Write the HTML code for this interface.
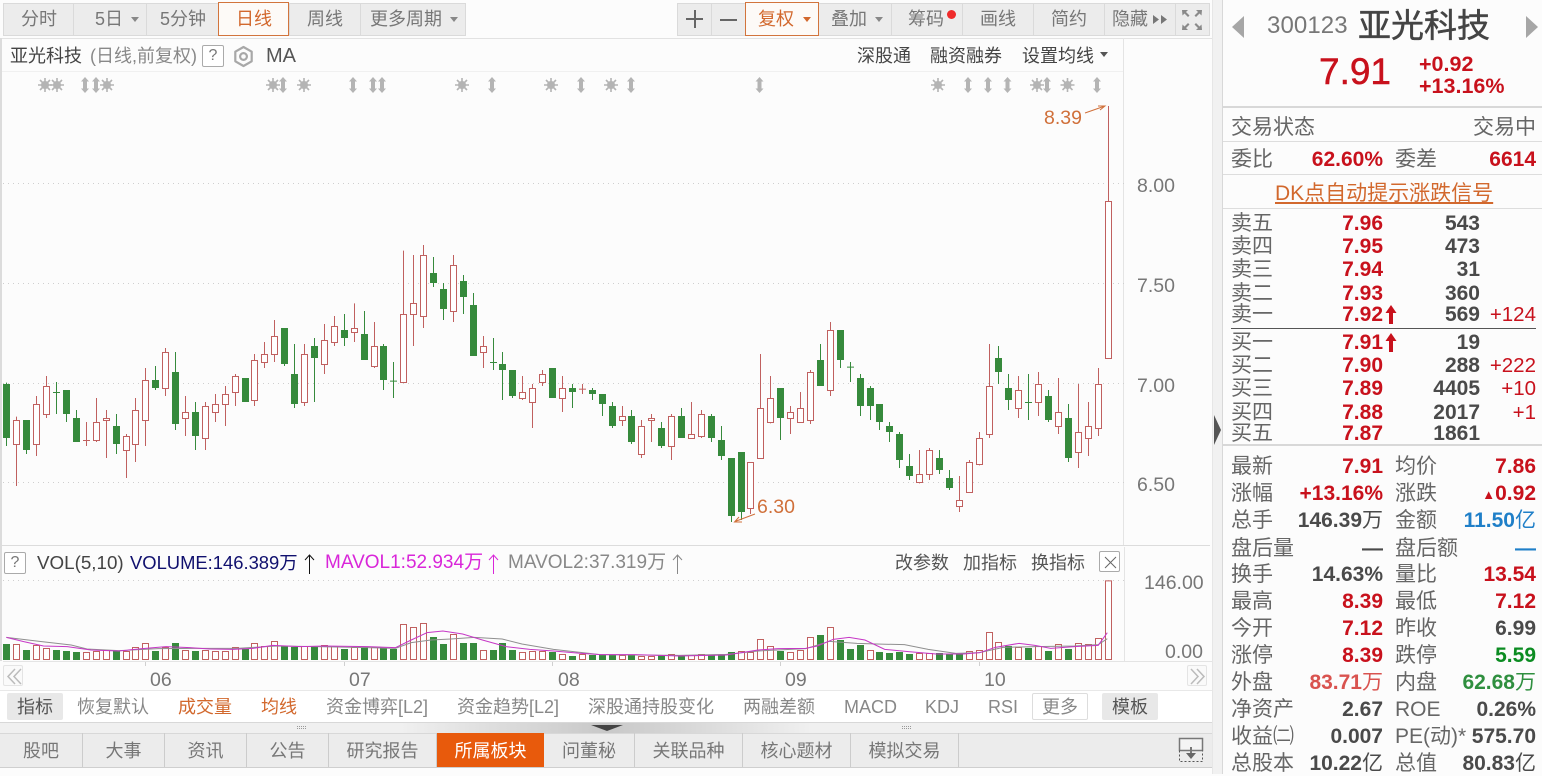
<!DOCTYPE html>
<html><head><meta charset="utf-8"><style>
html,body{margin:0;padding:0;width:1542px;height:774px;overflow:hidden;background:#fcfcfc;font-family:"Liberation Sans","Noto Sans CJK SC",sans-serif;color:#666}
.t{position:absolute;white-space:nowrap;line-height:24px;height:24px;font-size:18px}
.ax{font-size:19.5px;color:#777}
.b{position:absolute;box-sizing:border-box}
.tb{position:absolute;top:3px;height:33px;background:#ececec;border:1px solid #dadada;box-sizing:border-box;color:#777;font-size:18px;line-height:31px;white-space:nowrap}
.tb span{position:absolute;top:0}
.car{position:absolute;width:0;height:0;border-left:4px solid transparent;border-right:4px solid transparent;border-top:5px solid #888;top:17px}
.tab{position:absolute;top:733px;height:34px;line-height:37px;text-align:center;font-size:18px;color:#777;border-right:1px solid #ccc;box-sizing:border-box}
.r{position:absolute;left:1231px;width:305px;height:24px;line-height:24px;font-size:21px;color:#666;white-space:nowrap}
.r span{position:absolute;top:0}
.l2{left:164px}
.v1{right:153px;font-weight:700;font-size:21px;color:#c8111c}
.v2{right:0;font-weight:700;font-size:21px;color:#c8111c}
.dk{color:#4a4a4a!important}
.n{font-weight:400;font-size:21px}
.p{left:111px;width:41px;text-align:right;font-weight:700;font-size:21px;color:#c8111c}
.q{right:56px;font-weight:700;font-size:21px;color:#4a4a4a}
.d{right:0;font-size:20.5px;color:#c8111c}
.hr{position:absolute;left:1223px;width:319px;height:1px;background:#ddd}
.tl{position:absolute;top:690px;height:32px;line-height:35px;font-size:18px;color:#888;white-space:nowrap}
.or{color:#d2682d}
</style></head><body>

<!-- left edge -->
<div class="b" style="left:0;top:38px;width:2px;height:623px;background:#dcdcdc"></div>

<!-- toolbar left -->
<div class="tb" style="left:3px;width:71px"><span style="left:17px">分时</span></div>
<div class="tb" style="left:73px;width:74px"><span style="left:21px">5日</span><i class="car" style="left:57px;top:13px"></i></div>
<div class="tb" style="left:146px;width:73px"><span style="left:13px">5分钟</span></div>
<div class="tb" style="left:289px;width:72px"><span style="left:17px">周线</span></div>
<div class="tb" style="left:360px;width:106px"><span style="left:9px">更多周期</span><i class="car" style="left:89px;top:13px"></i></div>
<div class="tb" style="left:218px;width:71px;background:#fdfaf7;border-color:#d2743c;color:#d2682d;top:2px;height:34px;line-height:33px"><span style="left:17px">日线</span></div>

<!-- toolbar right -->
<div class="tb" style="left:677px;width:35px"></div>
<div class="tb" style="left:711px;width:35px"></div>
<div class="b" style="left:686px;top:18px;width:17px;height:2px;background:#666"></div>
<div class="b" style="left:694px;top:10px;width:2px;height:18px;background:#666"></div>
<div class="b" style="left:720px;top:19px;width:17px;height:2px;background:#666"></div>
<div class="tb" style="left:818px;width:74px"><span style="left:12px">叠加</span><i class="car" style="left:56px;top:13px"></i></div>
<div class="tb" style="left:891px;width:72px"><span style="left:16px">筹码</span></div>
<div class="b" style="left:947px;top:10px;width:9px;height:9px;border-radius:50%;background:#ef2b2b"></div>
<div class="tb" style="left:962px;width:72px"><span style="left:17px">画线</span></div>
<div class="tb" style="left:1033px;width:72px"><span style="left:17px">简约</span></div>
<div class="tb" style="left:1104px;width:72px"><span style="left:7px">隐藏</span></div>
<svg class="b" style="left:1153px;top:14px" width="15" height="11" fill="#777"><path d="M0 1L6 5.500 0 10ZM8 1L14 5.500 8 10Z"/></svg>
<div class="tb" style="left:1175px;width:35px"></div>
<div class="tb" style="left:745px;width:74px;background:#fdfaf7;border-color:#d2743c;color:#d2682d;top:2px;height:34px;line-height:33px"><span style="left:12px">复权</span><i class="car" style="left:57px;top:14px;border-top-color:#d2682d"></i></div>
<svg class="b" style="left:1180px;top:8px" width="24" height="24" viewBox="0 0 24 24" fill="#8a8a8a"><path d="M2 2h6l-2 2 3.500 3.500-1.500 1.500-3.500-3.500-2 2zM22 2h-6l2 2-3.500 3.500 1.500 1.500 3.500-3.500 2 2zM2 22h6l-2-2 3.500-3.500-1.500-1.500-3.500 3.500-2-2zM22 22h-6l2-2-3.500-3.500 1.500-1.500 3.500 3.500 2-2z"/></svg>

<div class="b" style="left:2px;top:38px;width:1210px;height:1px;background:#e2e2e2"></div>

<!-- title row -->
<div class="t" style="left:10px;top:44px;color:#444">亚光科技</div>
<div class="t" style="left:90px;top:44px;color:#888">(日线,前复权)</div>
<div class="b" style="left:202px;top:45px;width:22px;height:22px;border:1px solid #aaa;border-radius:2px;font-size:16px;line-height:20px;text-align:center;color:#777;background:#fff">?</div>
<svg class="b" style="left:232px;top:45px" width="23" height="23" viewBox="0 0 23 23" fill="none" stroke="#a8a8a8" stroke-width="2.200" stroke-linejoin="round"><path d="M11.500 2l8.200 4.700v9.600l-8.200 4.700-8.200-4.700V6.700z"/><circle cx="11.500" cy="11.500" r="3.400"/></svg>
<div class="t" style="left:266px;top:44px;color:#555;font-size:20px">MA</div>
<div class="t" style="left:857px;top:44px;color:#444">深股通</div>
<div class="t" style="left:930px;top:44px;color:#444">融资融券</div>
<div class="t" style="left:1022px;top:44px;color:#444">设置均线</div>
<i class="car" style="left:1100px;top:52px;border-top-color:#555"></i>
<div class="b" style="left:2px;top:71px;width:1121px;height:1px;background:#f0f0f0"></div>
<div class="b" style="left:1123px;top:38px;width:1px;height:507px;background:#e4e4e4"></div>

<!-- main chart -->
<svg class="b" style="left:0;top:0" width="1212" height="690" viewBox="0 0 1212 690">
<defs>
<g id="s" fill="#b4b4b4"><circle r="4"/><path d="M-7 0H7M0-7V7M-5-5L5 5M-5 5L5-5" stroke="#b4b4b4" stroke-width="1.600"/></g>
<path id="a" fill="#b4b4b4" d="M0-8L4-3.500H2V3.500H4L0 8-4 3.500H-2V-3.500H-4z"/>
</defs>
<g stroke="#cfcfcf" stroke-width="1" stroke-dasharray="1 4">
<path d="M3 183.500H1128M3 283.500H1128M3 383.500H1128M3 482.500H1128M3 580.500H1124"/>
</g>
<use href="#s" x="45" y="85"/><use href="#s" x="57" y="85"/><use href="#a" x="85" y="85"/><use href="#a" x="96" y="85"/><use href="#s" x="107" y="85"/>
<use href="#s" x="273" y="85"/><use href="#a" x="283" y="85"/><use href="#s" x="304" y="85"/><use href="#a" x="353" y="85"/><use href="#a" x="373" y="85"/><use href="#a" x="382" y="85"/>
<use href="#s" x="462" y="85"/><use href="#a" x="492" y="85"/><use href="#s" x="551" y="85"/><use href="#a" x="581" y="85"/><use href="#s" x="611" y="85"/><use href="#a" x="631" y="85"/><use href="#a" x="759.500" y="85"/>
<use href="#s" x="938" y="85"/><use href="#a" x="968" y="85"/><use href="#a" x="988" y="85"/><use href="#a" x="1007.500" y="85"/><use href="#s" x="1037" y="85"/><use href="#a" x="1047" y="85"/><use href="#s" x="1067.500" y="85"/><use href="#a" x="1097" y="85"/>

<!-- group 1 -->
<g transform="translate(0,230) scale(.333333) translate(.5,0)" fill="none">
<path stroke="#c0605f" stroke-width="3" d="M49 560V768M109 498V678M139 438V564M259 576V648M289 504V636M319 540V684M379 612V744M406 504V696M436 414V648M496 354V498M556 498V618M616 516V660M646 492V576M676 468V588M706 432V528M763 372V528M793 336V414M823 270V396M913 342V528M973 282V432M1003 258V348M1063 220V336M1123 276V414"/>
<path stroke="#368a3c" stroke-width="3" d="M19 458V648M79 571V672M169 456V552M199 480V576M229 540V636M349 552V672M466 408V480M526 366V600M586 516V660M853 294V408M883 342V534M943 324V516M1033 252V348M1093 243V390M1150 342V480M1180 396V504"/>
<path stroke="#368a3c" stroke-width="21" d="M19 462V624M79 570V660M169 486V489M199 480V552M229 564V636M349 588V642M466 450V474M526 426V582M586 546V618M736 444V516M853 294V402M883 432V522M943 348V384M1033 300V324M1093 312V390M1150 348V450M1180 452V455"/>
<path stroke="#c0605f" stroke-width="21" d="M259 630V633"/>
<path transform="translate(0,.5)" stroke="#c0605f" stroke-width="3" fill="#fff" d="M49 571m-9 0h18V643h-18zM109 523m-9 0h18V643h-18zM139 469m-9 0h18V553h-18zM289 577m-9 0h18V631h-18zM319 565m-9 0h18V571h-18zM379 619m-9 0h18V661h-18zM406 541m-9 0h18V643h-18zM436 451m-9 0h18V571h-18zM496 367m-9 0h18V475h-18zM556 547m-9 0h18V565h-18zM616 529m-9 0h18V625h-18zM646 523m-9 0h18V547h-18zM676 493m-9 0h18V523h-18zM706 439m-9 0h18V487h-18zM763 391m-9 0h18V511h-18zM793 373m-9 0h18V397h-18zM823 319m-9 0h18V373h-18zM913 373m-9 0h18V517h-18zM973 331m-9 0h18V403h-18zM1003 289m-9 0h18V337h-18zM1063 295m-9 0h18V307h-18zM1123 349m-9 0h18V409h-18z"/>
</g>

<!-- group 2 -->
<g transform="translate(400,230) scale(.333333) translate(.5,0)" fill="none">
<path stroke="#c0605f" stroke-width="3" d="M10 62V458M40 75V348M70 45V294M160 75V276M250 318V414M367 438V510M397 462V594M427 420V468M487 438V546M547 462V492M667 528V588M724 570V684M754 552V636M814 552V690M874 516V624M904 540V624M1051 697V852M1081 372V686M1111 438V580M1171 528V612"/>
<path stroke="#368a3c" stroke-width="3" d="M100 81V171M130 159V270M190 135V252M220 189V378M280 324V420M307 366V510M337 420V504M517 462V534M577 474V510M607 492V558M637 516V594M694 540V642M784 576V654M844 534V624M934 552V636M964 588V690M994 684V876M1024 666V870M1141 474V630"/>
<path stroke="#368a3c" stroke-width="21" d="M100 129V159M130 177V237M190 153V201M220 225V378M280 396V399M307 402V420M337 420V498M457 414V504M517 474V486M577 480V492M607 492V522M637 528V588M694 558V636M784 594V648M844 558V624M934 558V624M964 630V678M994 684V858M1024 666V846M1141 474V564"/>
<path stroke="#c0605f" stroke-width="21" d="M547 476V479"/>
<path transform="translate(0,.5)" stroke="#c0605f" stroke-width="3" fill="#fff" d="M10 253m-9 0h18V457h-18zM40 220m-9 0h18V253h-18zM70 76m-9 0h18V259h-18zM160 106m-9 0h18V244h-18zM250 349m-9 0h18V367h-18zM367 487m-9 0h18V505h-18zM397 475m-9 0h18V517h-18zM427 433m-9 0h18V457h-18zM487 475m-9 0h18V505h-18zM667 559m-9 0h18V571h-18zM724 589m-9 0h18V673h-18zM754 565m-9 0h18V571h-18zM814 559m-9 0h18V649h-18zM874 613m-9 0h18V625h-18zM904 553m-9 0h18V619h-18zM1051 697m-9 0h18V835h-18zM1081 535m-9 0h18V685h-18zM1111 505m-9 0h18V577h-18zM1171 547m-9 0h18V565h-18z"/>
</g>

<!-- group 3 -->
<g transform="translate(780,90) scale(.333333) translate(.5,0)" fill="none">
<path stroke="#c0605f" stroke-width="3" d="M61 906V998M91 840V1002M151 696V918M418 1080V1180M448 1074V1170M538 1158V1266M568 1110V1208M598 1026V1126M628 762V1044M715 858V984M775 846V978M835 864V1032M895 882V1134M925 936V1098M955 834V1038M985 48V806"/>
<path stroke="#368a3c" stroke-width="3" d="M121 762V888M181 720V834M211 816V876M241 852V978M271 888V990M298 942V1020M328 996V1056M358 1026V1134M388 1092V1170M478 1080V1152M508 1140V1200M655 768V882M685 852V960M745 852V990M805 900V996M865 942V1116"/>
<path stroke="#368a3c" stroke-width="21" d="M121 810V888M181 720V810M211 830V833M241 864V948M271 894V948M298 942V996M328 1008V1026M358 1032V1110M388 1128V1158M478 1104V1140M508 1164V1194M655 804V846M685 894V930M745 936V939M805 918V990M865 984V1104"/>
<path transform="translate(0,.5)" stroke="#c0605f" stroke-width="3" fill="#fff" d="M61 955m-9 0h18V997h-18zM91 847m-9 0h18V991h-18zM151 721m-9 0h18V901h-18zM418 1153m-9 0h18V1177h-18zM448 1081m-9 0h18V1153h-18zM538 1231m-9 0h18V1249h-18zM568 1117m-9 0h18V1207h-18zM598 1045m-9 0h18V1123h-18zM628 889m-9 0h18V1033h-18zM715 901m-9 0h18V955h-18zM775 883m-9 0h18V937h-18zM835 967m-9 0h18V1009h-18zM895 1027m-9 0h18V1087h-18zM925 1009m-9 0h18V1045h-18zM955 883m-9 0h18V1015h-18zM985 334m-9 0h18V805h-18z"/>
</g>

<!-- arrows at high/low -->
<path d="M1085 113L1105 106M1098 106L1105 106L1100 110" fill="none" stroke="#d0703a" stroke-width="1"/>
<path d="M755 514L735 521.500M742 522L734.500 522L739 517" fill="none" stroke="#d0703a" stroke-width="1"/>

<!-- volume bars -->
<g transform="translate(0,540) scale(.333333) translate(.5,0)" fill="none">
<path stroke="#368a3c" stroke-width="21" d="M19 312V360M79 330V360M169 330V360M199 333V360M229 336V360M349 333V360M466 333V360M526 309V360M586 333V360M736 327V360M853 318V360M883 321V360M943 318V360M1033 327V360M1093 321V360M1150 324V360M1180 327V360"/>
<path transform="translate(0,.5)" stroke="#c0605f" stroke-width="3" fill="#fff" d="M49 313m-9 0h18V358h-18zM109 316m-9 0h18V358h-18zM139 325m-9 0h18V358h-18zM259 337m-9 0h18V358h-18zM289 334m-9 0h18V358h-18zM319 331m-9 0h18V358h-18zM379 334m-9 0h18V358h-18zM406 322m-9 0h18V358h-18zM436 310m-9 0h18V358h-18zM496 322m-9 0h18V358h-18zM556 331m-9 0h18V358h-18zM616 331m-9 0h18V358h-18zM646 334m-9 0h18V358h-18zM676 334m-9 0h18V358h-18zM706 322m-9 0h18V358h-18zM763 310m-9 0h18V358h-18zM793 319m-9 0h18V358h-18zM823 304m-9 0h18V358h-18zM913 319m-9 0h18V358h-18zM973 316m-9 0h18V358h-18zM1003 319m-9 0h18V358h-18zM1063 322m-9 0h18V358h-18zM1123 322m-9 0h18V358h-18z"/>
</g>
<g transform="translate(400,540) scale(.333333) translate(.5,0)" fill="none">
<path stroke="#368a3c" stroke-width="21" d="M100 291V360M130 312V360M190 309V360M220 309V360M280 330V360M307 309V360M337 330V360M457 336V360M517 348V360M577 345V360M607 345V360M637 345V360M694 345V360M784 345V360M844 345V360M934 345V360M964 345V360M994 336V360M1141 333V360"/>
<path transform="translate(0,.5)" stroke="#c0605f" stroke-width="3" fill="#fff" d="M10 253m-9 0h18V358h-18zM40 262m-9 0h18V358h-18zM70 250m-9 0h18V358h-18zM160 283m-9 0h18V358h-18zM250 331m-9 0h18V358h-18zM367 337m-9 0h18V358h-18zM397 334m-9 0h18V358h-18zM427 334m-9 0h18V358h-18zM487 343m-9 0h18V358h-18zM547 343m-9 0h18V358h-18zM667 346m-9 0h18V358h-18zM724 349m-9 0h18V358h-18zM754 349m-9 0h18V358h-18zM814 343m-9 0h18V358h-18zM874 346m-9 0h18V358h-18zM904 343m-9 0h18V358h-18zM1024 334m-9 0h18V358h-18zM1051 337m-9 0h18V358h-18zM1081 298m-9 0h18V358h-18zM1111 319m-9 0h18V358h-18zM1171 337m-9 0h18V358h-18z"/>
</g>
<g transform="translate(780,540) scale(.333333) translate(.5,0)" fill="none">
<path stroke="#368a3c" stroke-width="21" d="M121 285V360M181 300V360M211 327V360M241 315V360M298 336V360M328 339V360M358 336V360M388 342V360M478 339V360M508 342V360M538 339V360M685 318V360M745 324V360M805 333V360M865 327V360"/>
<path transform="translate(0,.5)" stroke="#c0605f" stroke-width="3" fill="#fff" d="M61 331m-9 0h18V358h-18zM91 292m-9 0h18V358h-18zM151 262m-9 0h18V358h-18zM271 331m-9 0h18V358h-18zM418 340m-9 0h18V358h-18zM448 340m-9 0h18V358h-18zM568 334m-9 0h18V358h-18zM598 331m-9 0h18V358h-18zM628 277m-9 0h18V358h-18zM655 307m-9 0h18V358h-18zM715 322m-9 0h18V358h-18zM775 319m-9 0h18V358h-18zM835 313m-9 0h18V358h-18zM895 310m-9 0h18V358h-18zM925 313m-9 0h18V358h-18zM955 295m-9 0h18V358h-18zM985 122m-9 0h18V358h-18z"/>
</g>

<!-- volume MA lines -->
<g transform="translate(0,540) scale(.3954,.333333)" fill="none">
<path vector-effect="non-scaling-stroke" stroke="#8f8f8f" stroke-width="1" d="M16 292L100 304 180 315 220 327 300 332 400 326 500 325 600 325 700 318 800 320 900 322 1000 325 1040 308 1090 300 1140 297 1200 292 1270 297 1320 312 1400 328 1518 344"/>
<path vector-effect="non-scaling-stroke" stroke="#c637c6" stroke-width="1" d="M16 292L60 305 110 318 170 320 230 330 300 333 360 326 420 320 480 323 530 327 590 328 640 325 690 316 760 320 820 318 930 320 1000 323 1040 300 1080 278 1120 273 1170 282 1220 300 1280 320 1340 328 1400 333 1470 340 1518 344"/>
</g>
<g transform="translate(600,540) scale(.3954,.333333)" fill="none">
<path vector-effect="non-scaling-stroke" stroke="#8f8f8f" stroke-width="1" d="M0 344L200 346 320 343 400 333 520 326 580 304 650 310 700 312 770 314 830 328 900 340 960 338 1020 322 1100 320 1200 318 1260 314 1283 296"/>
<path vector-effect="non-scaling-stroke" stroke="#c637c6" stroke-width="1" d="M0 344L90 344 200 348 320 345 400 330 450 326 520 325 550 318 590 298 630 292 670 300 720 328 780 335 850 342 920 342 960 338 1000 322 1060 310 1100 316 1140 325 1200 320 1260 316 1283 278"/>
</g>
<path d="M3 661.500H1212" stroke="#e4e4e4"/>
<path d="M145.500 662V666M344.500 662V666M552.500 662V666M780.500 662V666M979.500 662V666" stroke="#d0d0d0"/>
</svg>

<div class="t" style="left:1044px;top:106px;color:#d0703a;font-size:19.5px">8.39</div>
<div class="t" style="left:757px;top:495px;color:#d0703a;font-size:19.5px">6.30</div>
<div class="t ax" style="left:1137px;top:174px">8.00</div>
<div class="t ax" style="left:1137px;top:274px">7.50</div>
<div class="t ax" style="left:1137px;top:374px">7.00</div>
<div class="t ax" style="left:1137px;top:473px">6.50</div>

<!-- volume head -->
<div class="b" style="left:2px;top:545px;width:1208px;height:1px;background:#dcdcdc"></div>
<div class="b" style="left:4px;top:552px;width:22px;height:22px;border:1px solid #aaa;border-radius:2px;font-size:16px;line-height:20px;text-align:center;color:#777;background:#fff">?</div>
<div class="t" style="left:37px;top:551px;color:#444;font-size:18.800px">VOL(5,10)</div>
<div class="t" style="left:130px;top:551px;color:#10106e;font-size:18.400px">VOLUME:146.389万</div>
<div class="t" style="left:325px;top:551px;color:#d926d9;font-size:19px">MAVOL1:52.934万</div>
<div class="t" style="left:508px;top:551px;color:#888;font-size:19px">MAVOL2:37.319万</div>
<svg class="b" style="left:300px;top:552px" width="390" height="24" fill="none" stroke-width="1"><path stroke="#111" d="M9.500 22V3M5 8L9.500 3 14 8"/><path stroke="#d926d9" d="M193.500 22V3M189 8L193.500 3 198 8"/><path stroke="#888" d="M377.500 22V3M373 8L377.500 3 382 8"/></svg>
<div class="t" style="left:895px;top:551px;color:#555">改参数</div>
<div class="t" style="left:963px;top:551px;color:#555">加指标</div>
<div class="t" style="left:1031px;top:551px;color:#555">换指标</div>
<svg class="b" style="left:1099px;top:551px;background:#fff;border:1px solid #aaa;border-radius:2px" width="21" height="21" fill="none" stroke="#666"><path d="M5 5L16 16M16 5L5 16"/></svg>

<!-- volume axis -->
<div class="b" style="left:1124px;top:547px;width:1px;height:114px;background:#e4e4e4"></div>
<div class="t ax" style="left:1144px;top:571px">146.00</div>
<div class="t ax" style="left:1165px;top:640px">0.00</div>

<!-- x axis -->
<svg class="b" style="left:3px;top:665px;background:#fafafa;border:1px solid #e4e4e4;border-radius:2px" width="20" height="21" fill="none" stroke="#bbb" stroke-width="1.500"><path d="M11 3L4 10.500 11 18M17 3L10 10.500 17 18"/></svg>
<svg class="b" style="left:1187px;top:665px;background:#fafafa;border:1px solid #e4e4e4;border-radius:2px" width="20" height="21" fill="none" stroke="#bbb" stroke-width="1.500"><path d="M3 3L10 10.500 3 18M9 3L16 10.500 9 18"/></svg>
<div class="t ax" style="left:150px;top:668px">06</div>
<div class="t ax" style="left:349px;top:668px">07</div>
<div class="t ax" style="left:558px;top:668px">08</div>
<div class="t ax" style="left:785px;top:668px">09</div>
<div class="t ax" style="left:984px;top:668px">10</div>

<!-- indicator row -->
<div class="b" style="left:0;top:690px;width:1212px;height:32px;background:#fff;border-top:1px solid #e8e8e8"></div>
<div class="b" style="left:7px;top:693px;width:56px;height:27px;background:#e8e8e8;border-radius:2px;text-align:center;font-size:18px;line-height:28px;color:#555">指标</div>
<div class="tl" style="left:77px">恢复默认</div>
<div class="tl or" style="left:178px">成交量</div>
<div class="tl or" style="left:261px">均线</div>
<div class="tl" style="left:326px">资金博弈[L2]</div>
<div class="tl" style="left:457px">资金趋势[L2]</div>
<div class="tl" style="left:588px">深股通持股变化</div>
<div class="tl" style="left:743px">两融差额</div>
<div class="tl" style="left:844px">MACD</div>
<div class="tl" style="left:925px">KDJ</div>
<div class="tl" style="left:988px">RSI</div>
<div class="b" style="left:1032px;top:693px;width:56px;height:27px;border:1px solid #ddd;border-radius:2px;text-align:center;font-size:18px;line-height:26px;color:#888;background:#fff">更多</div>
<div class="b" style="left:1102px;top:693px;width:56px;height:27px;background:#e8e8e8;border-radius:2px;text-align:center;font-size:18px;line-height:28px;color:#555">模板</div>

<!-- drag row -->
<div class="b" style="left:0;top:722px;width:1212px;height:11px;background:linear-gradient(90deg,#f0f0f0 0,#f0f0f0 33%,#c8c8c8 50%,#f0f0f0 67%,#f0f0f0 100%);border-top:1px solid #d8d8d8"></div>
<svg class="b" style="left:0;top:722px" width="1212" height="11"><path d="M591 3H623L607 9Z" fill="#444"/><g fill="#999"><path d="M297 4h1v1h-1zM299 4h1v1h-1zM301 4h1v1h-1zM303 4h1v1h-1zM305 4h1v1h-1zM297 6h1v1h-1zM299 6h1v1h-1zM301 6h1v1h-1zM303 6h1v1h-1zM305 6h1v1h-1zM902 4h1v1h-1zM904 4h1v1h-1zM906 4h1v1h-1zM908 4h1v1h-1zM910 4h1v1h-1zM902 6h1v1h-1zM904 6h1v1h-1zM906 6h1v1h-1zM908 6h1v1h-1zM910 6h1v1h-1z"/></g></svg>

<!-- bottom tabs -->
<div class="b" style="left:0;top:733px;width:1212px;background:#ececec;border-top:1px solid #d8d8d8;border-bottom:1px solid #cfcfcf;box-sizing:content-box;height:33px"></div>
<div class="tab" style="left:0;width:83px">股吧</div>
<div class="tab" style="left:83px;width:82px">大事</div>
<div class="tab" style="left:165px;width:82px">资讯</div>
<div class="tab" style="left:247px;width:82px">公告</div>
<div class="tab" style="left:329px;width:108px">研究报告</div>
<div class="tab" style="left:437px;width:107px;background:#e85a0c;color:#fff;border:none">所属板块</div>
<div class="tab" style="left:544px;width:91px">问董秘</div>
<div class="tab" style="left:635px;width:108px">关联品种</div>
<div class="tab" style="left:743px;width:108px">核心题材</div>
<div class="tab" style="left:851px;width:108px">模拟交易</div>
<svg class="b" style="left:1178px;top:737px" width="26" height="26" fill="none" stroke="#777"><path d="M1.500 1.500H24.500V13.500H1.500Z" stroke-width="1.500" fill="#f4f4f4"/><path d="M1.500 13.500V24.500H24.500V13.500" stroke-dasharray="2 2" stroke="#555"/><path d="M13 10V18" stroke-width="2"/><path d="M8 16H18L13 22Z" fill="#666" stroke="none"/></svg>

<!-- gutter -->
<div class="b" style="left:1212px;top:0;width:10px;height:774px;background:#f1f1f1;border-left:1px solid #e6e6e6"></div>
<div class="b" style="left:1222px;top:0;width:1px;height:774px;background:#d8d8d8"></div>
<svg class="b" style="left:1213px;top:414px" width="9" height="32"><path d="M1 1L8 16 1 31Z" fill="#555"/></svg>

<!-- header right -->
<svg class="b" style="left:1230px;top:14px" width="16" height="26"><path d="M14 2V24L2 13Z" fill="#a6a6a6"/></svg>
<svg class="b" style="left:1524px;top:14px" width="16" height="26"><path d="M2 2V24L14 13Z" fill="#a6a6a6"/></svg>
<div class="t" style="left:1267px;top:12px;font-size:24px;line-height:28px;height:28px;color:#777;letter-spacing:.1px">300123</div>
<div class="t" style="left:1358px;top:6px;font-size:33px;line-height:40px;height:40px;color:#444;-webkit-text-stroke:.5px #444">亚光科技</div>
<div class="t" style="left:1319px;top:50px;font-size:37px;line-height:44px;height:44px;color:#c8111c;-webkit-text-stroke:.5px #c8111c">7.91</div>
<div class="t" style="left:1419px;top:52px;font-size:21.500px;font-weight:700;color:#c8111c">+0.92</div>
<div class="t" style="left:1419px;top:74px;font-size:21.500px;font-weight:700;color:#c8111c">+13.16%</div>
<div class="b" style="left:1223px;top:106px;width:319px;height:2px;background:#d8d8d8"></div>

<div class="r" style="top:116px"><span style="left:0">交易状态</span><span style="right:0">交易中</span></div>
<div class="hr" style="top:141px"></div>
<div class="r" style="top:148px"><span style="left:0">委比</span><span class="v1">62.60%</span><span class="l2">委差</span><span class="v2">6614</span></div>
<div class="hr" style="top:174px"></div>
<div class="t" style="left:1275px;top:182px;font-size:21px;color:#d2682d;text-decoration:underline">DK点自动提示涨跌信号</div>
<div class="hr" style="top:208px"></div>

<!-- order book -->
<div class="r" style="top:212px"><span style="left:0">卖五</span><span class="p">7.96</span><span class="q">543</span></div>
<div class="r" style="top:235px"><span style="left:0">卖四</span><span class="p">7.95</span><span class="q">473</span></div>
<div class="r" style="top:258px"><span style="left:0">卖三</span><span class="p">7.94</span><span class="q">31</span></div>
<div class="r" style="top:282px"><span style="left:0">卖二</span><span class="p">7.93</span><span class="q">360</span></div>
<div class="r" style="top:303px"><span style="left:0">卖一</span><span class="p">7.92</span><span class="q">569</span><span class="d">+124</span></div>
<div class="b" style="left:1231px;top:328px;width:305px;height:1px;background:#555"></div>
<div class="r" style="top:331px"><span style="left:0">买一</span><span class="p">7.91</span><span class="q">19</span></div>
<div class="r" style="top:354px"><span style="left:0">买二</span><span class="p">7.90</span><span class="q">288</span><span class="d">+222</span></div>
<div class="r" style="top:377px"><span style="left:0">买三</span><span class="p">7.89</span><span class="q">4405</span><span class="d">+10</span></div>
<div class="r" style="top:401px"><span style="left:0">买四</span><span class="p">7.88</span><span class="q">2017</span><span class="d">+1</span></div>
<div class="r" style="top:422px"><span style="left:0">买五</span><span class="p">7.87</span><span class="q">1861</span></div>
<svg class="b" style="left:1385px;top:305px" width="12" height="52" fill="#c8111c"><path d="M6 0L11.500 8H8V19H4V8H.5ZM6 28L11.500 36H8V47H4V36H.5Z"/></svg>
<div class="b" style="left:1223px;top:444px;width:319px;height:2px;background:#d8d8d8"></div>

<!-- stats -->
<div class="r" style="top:455px"><span style="left:0">最新</span><span class="v1">7.91</span><span class="l2">均价</span><span class="v2">7.86</span></div>
<div class="r" style="top:482px"><span style="left:0">涨幅</span><span class="v1">+13.16%</span><span class="l2">涨跌</span><span class="v2"><span style="position:static;font-size:13px;vertical-align:1px">&#9650;</span>0.92</span></div>
<div class="r" style="top:509px"><span style="left:0">总手</span><span class="v1 dk">146.39<span class="n" style="position:static">万</span></span><span class="l2">金额</span><span class="v2" style="color:#1f7fc8">11.50<span class="n" style="position:static">亿</span></span></div>
<div class="r" style="top:537px"><span style="left:0">盘后量</span><span class="v1 dk">—</span><span class="l2">盘后额</span><span class="v2" style="color:#1f7fc8">—</span></div>
<div class="r" style="top:563px"><span style="left:0">换手</span><span class="v1 dk">14.63%</span><span class="l2">量比</span><span class="v2">13.54</span></div>
<div class="r" style="top:590px"><span style="left:0">最高</span><span class="v1">8.39</span><span class="l2">最低</span><span class="v2">7.12</span></div>
<div class="r" style="top:617px"><span style="left:0">今开</span><span class="v1">7.12</span><span class="l2">昨收</span><span class="v2 dk">6.99</span></div>
<div class="r" style="top:644px"><span style="left:0">涨停</span><span class="v1">8.39</span><span class="l2">跌停</span><span class="v2" style="color:#0c8c22">5.59</span></div>
<div class="r" style="top:671px"><span style="left:0">外盘</span><span class="v1" style="color:#d9534f">83.71<span class="n" style="position:static">万</span></span><span class="l2">内盘</span><span class="v2" style="color:#2f8f3f">62.68<span class="n" style="position:static">万</span></span></div>
<div class="r" style="top:698px"><span style="left:0">净资产</span><span class="v1 dk">2.67</span><span class="l2">ROE</span><span class="v2 dk">0.26%</span></div>
<div class="r" style="top:725px"><span style="left:0">收益㈡</span><span class="v1 dk">0.007</span><span class="l2">PE(动)*</span><span class="v2 dk">575.70</span></div>
<div class="r" style="top:752px"><span style="left:0">总股本</span><span class="v1 dk">10.22<span class="n" style="position:static">亿</span></span><span class="l2">总值</span><span class="v2 dk">80.83<span class="n" style="position:static">亿</span></span></div>
</body></html>
